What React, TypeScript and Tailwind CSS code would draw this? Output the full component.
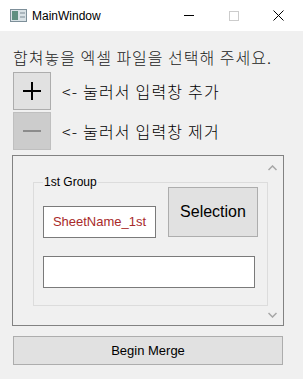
export default function App() {
  const ui = { fontFamily: '"Liberation Sans", "Noto Sans CJK KR", sans-serif' };
  const kr = { fontFamily: '"Noto Sans CJK KR", "Liberation Sans", sans-serif' };

  return (
    <div className="w-[303px] h-[379px] bg-[#f0f0f0] overflow-hidden text-black" style={ui}>
      {/* Title bar */}
      <div className="h-[31px] bg-white flex items-center">
        <svg className="ml-[10px] w-[17px] h-[13px]" viewBox="0 0 17 13">
          <rect x="0.5" y="0.5" width="16" height="12" fill="#d9e2e6" stroke="#7d8f99" />
          <rect x="2" y="2" width="6" height="9" fill="#5f8f80" />
          <rect x="10" y="3" width="5" height="2" fill="#aab6bd" />
          <rect x="10" y="7" width="5" height="2" fill="#aab6bd" />
        </svg>
        <span className="ml-[5px] text-[12px] leading-[16px]">MainWindow</span>
        <div className="ml-auto mr-[2px] flex">
          <div className="w-[45px] h-[31px] flex items-center justify-center">
            <div className="w-[10px] h-px bg-black" />
          </div>
          <div className="w-[45px] h-[31px] flex items-center justify-center">
            <div className="w-[10px] h-[10px] border border-[#cccccc]" />
          </div>
          <div className="w-[45px] h-[31px] flex items-center justify-center">
            <svg className="w-[11px] h-[11px]" viewBox="0 0 11 11">
              <path d="M0.5 0.5L10.5 10.5M10.5 0.5L0.5 10.5" stroke="#000" strokeWidth="1" />
            </svg>
          </div>
        </div>
      </div>

      {/* Content */}
      <div className="px-[13px]">
        <div className="mt-[16px] text-[16px] leading-[20px] tracking-[1px] font-light text-[#1a1a1a]" style={kr}>
          합쳐놓을 엑셀 파일을 선택해 주세요.
        </div>

        <div className="mt-[5px] flex items-center">
          <button className="w-[38px] h-[38px] bg-[#e1e1e1] border border-[#adadad] flex items-center justify-center">
            <svg className="w-[20px] h-[20px]" viewBox="0 0 20 20">
              <path d="M10 1V19M1 10H19" stroke="#000" strokeWidth="2" />
            </svg>
          </button>
          <span className="ml-[11px] text-[16px] leading-[20px] tracking-[1.2px] font-light" style={kr}>
            &lt;- 눌러서 입력창 추가
          </span>
        </div>

        <div className="mt-[2px] flex items-center">
          <button className="w-[38px] h-[38px] bg-[#cccccc] border border-[#bfbfbf] flex items-center justify-center">
            <svg className="w-[20px] h-[20px]" viewBox="0 0 20 20">
              <path d="M1 10H19" stroke="#8c8c8c" strokeWidth="2" />
            </svg>
          </button>
          <span className="ml-[11px] text-[16px] leading-[20px] tracking-[1.2px] font-light" style={kr}>
            &lt;- 눌러서 입력창 제거
          </span>
        </div>

        {/* Scroll area */}
        <div className="relative mt-[5px] -ml-px w-[272px] h-[171px] border border-[#828282] pl-[20px] pt-[19px]">
          <fieldset className="w-[232px] border border-[#dcdcdc] px-[9px] pb-[17px]">
            <legend className="px-[1px] text-[12px] leading-[14px]">1st Group</legend>
            <div className="-mt-[2px] flex items-start">
              <div className="mt-[19px] w-[113px] h-[32px] bg-white border border-[#7a7a7a] flex items-center justify-center text-[13px] text-[#a82a2a]">
                SheetName_1st
              </div>
              <button className="ml-[12px] w-[90px] h-[50px] bg-[#e1e1e1] border border-[#adadad] text-[16px]">
                Selection
              </button>
            </div>
            <div className="mt-[18px] w-[212px] h-[32px] bg-white border border-[#7a7a7a]" />
          </fieldset>
          {/* scroll arrows */}
          <svg className="absolute right-[6px] top-[9px] w-[9px] h-[6px]" viewBox="0 0 9 6">
            <path d="M0.5 5L4.5 1L8.5 5" fill="none" stroke="#a6a6a6" strokeWidth="1.5" />
          </svg>
          <svg className="absolute right-[6px] bottom-[7px] w-[9px] h-[6px]" viewBox="0 0 9 6">
            <path d="M0.5 1L4.5 5L8.5 1" fill="none" stroke="#a6a6a6" strokeWidth="1.5" />
          </svg>
        </div>

        <button className="mt-[10px] w-[270px] h-[29px] bg-[#e1e1e1] border border-[#adadad] text-[13px] flex items-center justify-center">
          Begin Merge
        </button>
      </div>
    </div>
  );
}
